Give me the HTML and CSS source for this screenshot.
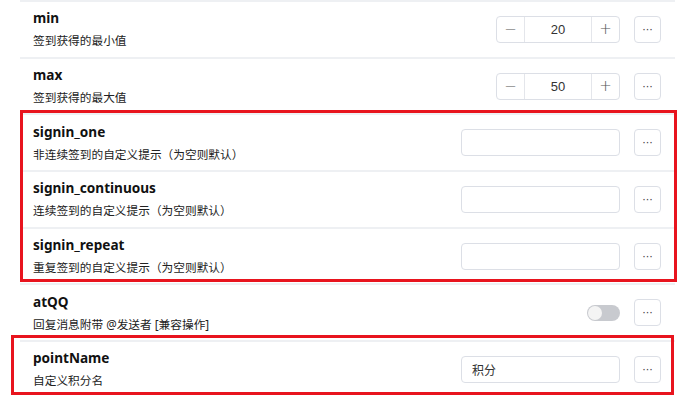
FILE: index.html
```html
<!DOCTYPE html>
<html lang="zh-CN">
<head>
    <meta charset="UTF-8">
    <meta name="viewport" content="width=device-width, initial-scale=1.0">
    <title>签到配置</title>
    <link rel="stylesheet" href="styles.css">
</head>
<body>
    <div class="config-list">
        <div class="config-item">
            <div class="info">
                <div class="name">min</div>
                <div class="desc">签到获得的最小值</div>
            </div>
            <div class="controls">
                <div class="number-input">
                    <span class="step">−</span>
                    <span class="value">20</span>
                    <span class="step">+</span>
                </div>
                <button class="more">···</button>
            </div>
        </div>
        <div class="config-item">
            <div class="info">
                <div class="name">max</div>
                <div class="desc">签到获得的最大值</div>
            </div>
            <div class="controls">
                <div class="number-input">
                    <span class="step">−</span>
                    <span class="value">50</span>
                    <span class="step">+</span>
                </div>
                <button class="more">···</button>
            </div>
        </div>

        <!-- highlighted group -->
        <div class="group group-signin">
            <div class="config-item">
                <div class="info">
                    <div class="name">signin_one</div>
                    <div class="desc">非连续签到的自定义提示（为空则默认）</div>
                </div>
                <div class="controls">
                    <input class="text-input" type="text">
                    <button class="more">···</button>
                </div>
            </div>
            <div class="config-item">
                <div class="info">
                    <div class="name">signin_continuous</div>
                    <div class="desc">连续签到的自定义提示（为空则默认）</div>
                </div>
                <div class="controls">
                    <input class="text-input" type="text">
                    <button class="more">···</button>
                </div>
            </div>
            <div class="config-item">
                <div class="info">
                    <div class="name">signin_repeat</div>
                    <div class="desc">重复签到的自定义提示（为空则默认）</div>
                </div>
                <div class="controls">
                    <input class="text-input" type="text">
                    <button class="more">···</button>
                </div>
            </div>
        </div>

        <div class="config-item">
            <div class="info">
                <div class="name">atQQ</div>
                <div class="desc">回复消息附带 @发送者 [兼容操作]</div>
            </div>
            <div class="controls">
                <div class="switch"><span class="knob"></span></div>
                <button class="more">···</button>
            </div>
        </div>

        <div class="group group-point">
            <div class="config-item">
                <div class="info">
                    <div class="name">pointName</div>
                    <div class="desc">自定义积分名</div>
                </div>
                <div class="controls">
                    <input class="text-input" type="text" value="积分">
                    <button class="more">···</button>
                </div>
            </div>
        </div>
    </div>
</body>
</html>
```

FILE: styles.css
```css
body {
    margin: 0;
    padding: 0;
    background-color: #ffffff;
    font-family: "Noto Sans", "Noto Sans CJK SC", sans-serif;
    color: #1f2328;
}

.config-list {
    margin: 0 15px 0 20px;
}

.config-item {
    display: flex;
    align-items: center;
    justify-content: space-between;
    height: 56.7px;
    box-sizing: border-box;
    border-top: 2px solid #eef0f3;
    padding: 0 14px 0 13px;
}

.info .name {
    font-size: 13.6px;
    font-weight: bold;
    line-height: 22px;
    color: #111111;
}

.info .desc {
    font-size: 11.7px;
    line-height: 22px;
    color: #222222;
}

.controls {
    display: flex;
    align-items: center;
    gap: 14px;
}

.number-input {
    display: flex;
    width: 124px;
    height: 27px;
    box-sizing: border-box;
    border: 1px solid #dcdfe6;
    border-radius: 4px;
    font-family: "Liberation Sans", Arial, sans-serif;
    font-size: 13px;
    color: #333;
}

.number-input .step {
    width: 27px;
    display: flex;
    align-items: center;
    justify-content: center;
    font-family: "DejaVu Sans", sans-serif;
    font-size: 15px;
    font-weight: 300;
    color: #555;
}

.number-input .step:first-child {
    border-right: 1px solid #e4e6eb;
}

.number-input .step:last-child {
    border-left: 1px solid #e4e6eb;
}

.number-input .value {
    flex: 1;
    display: flex;
    align-items: center;
    justify-content: center;
}

.text-input {
    width: 159px;
    height: 27px;
    box-sizing: border-box;
    border: 1px solid #dcdfe6;
    border-radius: 4px;
    padding: 0 10px;
    font-family: "Noto Sans CJK SC", sans-serif;
    font-size: 12px;
    color: #333;
    outline: none;
}

.more {
    width: 27px;
    height: 27px;
    box-sizing: border-box;
    border: 1px solid #dcdfe6;
    border-radius: 4px;
    background-color: #ffffff;
    color: #444;
    font-family: "DejaVu Sans", sans-serif;
    font-size: 11px;
    padding: 0;
    cursor: pointer;
}

.switch {
    position: relative;
    width: 33px;
    height: 16px;
    border-radius: 8px;
    background-color: #c8cacf;
}

.switch .knob {
    position: absolute;
    top: 1px;
    left: 1px;
    width: 14px;
    height: 14px;
    border-radius: 50%;
    background-color: #f4f4f4;
}

.group {
    position: relative;
}

.group::after {
    content: "";
    position: absolute;
    border: 3px solid #e8141e;
    pointer-events: none;
}

.group-signin::after {
    top: -3px;
    left: 0;
    right: -2px;
    bottom: 1px;
}

.group-point::after {
    top: -5px;
    left: -9px;
    right: 1px;
    bottom: 2px;
}
```
